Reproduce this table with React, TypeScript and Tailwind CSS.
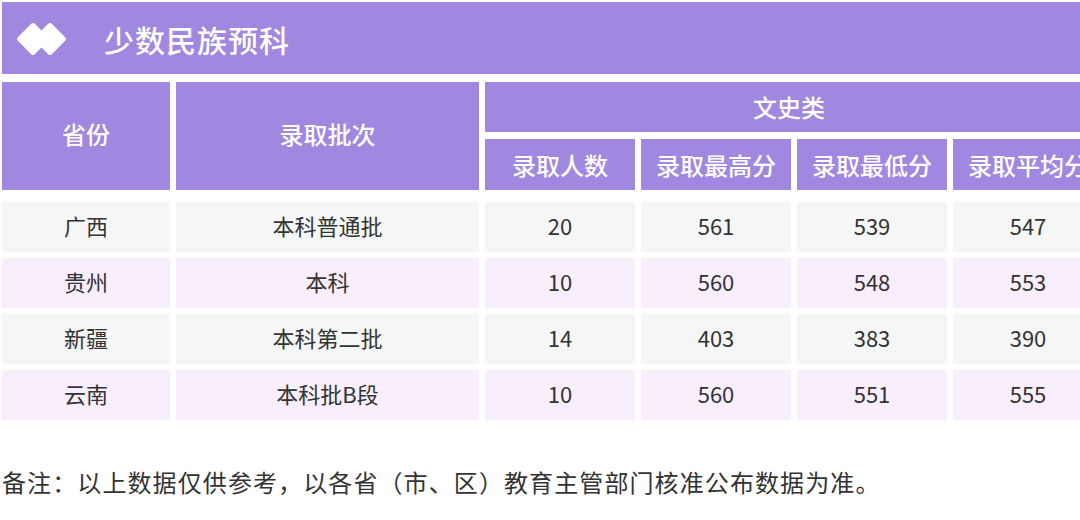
import React from 'react';

const rows = [
  { prov: '广西', batch: '本科普通批', n: 20, hi: 561, lo: 539, avg: 547 },
  { prov: '贵州', batch: '本科', n: 10, hi: 560, lo: 548, avg: 553 },
  { prov: '新疆', batch: '本科第二批', n: 14, hi: 403, lo: 383, avg: 390 },
  { prov: '云南', batch: '本科批B段', n: 10, hi: 560, lo: 551, avg: 555 },
];

const subHeads = ['录取人数', '录取最高分', '录取最低分', '录取平均分'];

const cols = 'grid grid-cols-[168px_303px_150px_150px_150px_150px] gap-x-[6px]';

const Diamonds = () => (
  <svg width="54" height="38" viewBox="0 0 54 38" className="shrink-0">
    <rect x="6" y="7" width="24" height="24" rx="2.5" transform="rotate(45 18 19)" fill="#fff" />
    <rect x="23" y="7" width="24" height="24" rx="2.5" transform="rotate(45 35 19)" fill="#fff" />
  </svg>
);

export default function App() {
  return (
    <div
      className="w-[1080px] h-[520px] overflow-hidden bg-white pl-[2px] pt-[2px]"
      style={{ fontFamily: '"Noto Sans CJK SC", "Noto Sans", sans-serif' }}
    >
      {/* title bar */}
      <div className="h-[72px] w-[1100px] bg-[#a087e0] flex items-center pl-[13px] pt-[2px]">
        <Diamonds />
        <h1 className="ml-[35px] text-[30px] font-medium text-white tracking-[1px]">少数民族预科</h1>
      </div>

      {/* header */}
      <div className={`${cols} grid-rows-[50px_51px] gap-y-[7px] mt-[8px] text-white text-[24px] font-medium`}>
        <div className="row-span-2 bg-[#a087e0] flex items-center justify-center pb-[4px]">省份</div>
        <div className="row-span-2 bg-[#a087e0] flex items-center justify-center pb-[4px]">录取批次</div>
        <div className="col-span-4 bg-[#a087e0] flex items-center justify-center pr-[10px]">文史类</div>
        {subHeads.map(h => (
          <div key={h} className="bg-[#a087e0] flex items-center justify-center whitespace-nowrap">{h}</div>
        ))}
      </div>

      {/* body */}
      <div className="mt-[12px] flex flex-col gap-[6px] text-[22px] text-[#333]">
        {rows.map((r, i) => (
          <div key={r.prov} className={`${cols} h-[50px]`}>
            {[r.prov, r.batch, r.n, r.hi, r.lo, r.avg].map((v, j) => (
              <div
                key={j}
                className={`${i % 2 ? 'bg-[#f8eefc]' : 'bg-[#f5f7f6]'} flex items-center justify-center pb-[3px]`}
              >
                {v}
              </div>
            ))}
          </div>
        ))}
      </div>

      <p className="mt-[50px] text-[24px] tracking-[1.1px] text-[#333] leading-none">
        备注：以上数据仅供参考，以各省（市、区）教育主管部门核准公布数据为准。
      </p>
    </div>
  );
}
